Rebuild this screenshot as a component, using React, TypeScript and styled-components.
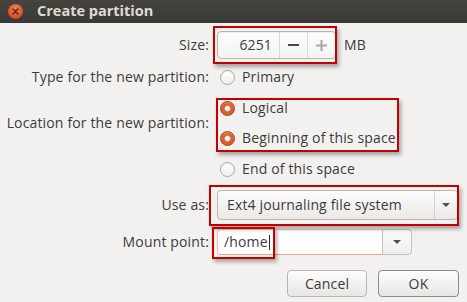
import React from "react";
import styled, { createGlobalStyle } from "styled-components";

const Global = createGlobalStyle`
  * { box-sizing: border-box; }
  html, body { margin: 0; padding: 0; }
  body {
    width: 467px;
    height: 302px;
    overflow: hidden;
    background: #f2f1f0;
    font-family: "Open Sans", "Noto Sans", sans-serif;
    font-size: 14px;
    letter-spacing: 0.15px;
    color: #3c3c3c;
  }
`;

const Window = styled.div`
  width: 467px;
  height: 302px;
  display: flex;
  flex-direction: column;
  background: #f2f1f0;
`;

const TitleBar = styled.div`
  height: 23px;
  flex: none;
  display: flex;
  align-items: center;
  padding-left: 8px;
  gap: 14px;
  background: linear-gradient(#45443f, #3a3935);
`;

const CloseButton = styled.div`
  width: 15px;
  height: 15px;
  border-radius: 50%;
  background: radial-gradient(circle at 50% 35%, #f6865a, #de4b17 70%, #b83c12);
  display: flex;
  align-items: center;
  justify-content: center;
`;

const Title = styled.div`
  color: #dfdbd2;
  font-weight: 700;
  font-size: 14.5px;
  letter-spacing: 0;
  line-height: 1;
  padding-bottom: 1px;
`;

const Body = styled.div`
  position: relative;
  flex: 1;
  padding-top: 6px;
  display: flex;
  flex-direction: column;
`;

const FormGrid = styled.div`
  display: grid;
  grid-template-columns: 209px auto;
  column-gap: 8px;
  grid-template-rows: 32px 32px 30px 30px 32px 40px 34px;
  align-items: center;
`;

const Label = styled.div<{ $rows?: string }>`
  grid-column: 1;
  grid-row: ${(p) => p.$rows ?? "auto"};
  justify-self: end;
  white-space: nowrap;
  line-height: 1;
`;

const Cell = styled.div<{ $row: number }>`
  grid-column: 2;
  grid-row: ${(p) => p.$row};
  display: flex;
  align-items: center;
  gap: 8px;
`;

const SpinBox = styled.div`
  display: flex;
  width: 119px;
  height: 28px;
  border: 1px solid #b9b6b0;
  border-radius: 4px;
  background: linear-gradient(#fdfdfd, #f4f3f2);
  box-shadow: inset 0 1px 1px rgba(0, 0, 0, 0.06);
  overflow: hidden;
`;

const SpinValue = styled.div`
  width: 61px;
  display: flex;
  align-items: center;
  justify-content: flex-end;
  padding-right: 7px;
  line-height: 1;
`;

const SpinStep = styled.div<{ $disabled?: boolean }>`
  flex: 1;
  display: flex;
  align-items: center;
  justify-content: center;
  border-left: 1px solid #dcd9d5;
  color: ${(p) => (p.$disabled ? "#a8a8a8" : "#4a4a4a")};
`;

const Unit = styled.span`
  line-height: 1;
`;

const RadioItem = styled.label`
  display: flex;
  align-items: center;
  gap: 7px;
  padding-left: 3px;
  line-height: 1;
  white-space: nowrap;
`;

const RadioCircle = styled.span<{ $checked?: boolean }>`
  width: 15px;
  height: 15px;
  border-radius: 50%;
  flex: none;
  border: 1px solid ${(p) => (p.$checked ? "#a4471e" : "#aaa7a1")};
  background: ${(p) =>
    p.$checked
      ? "radial-gradient(circle at 50% 50%, #ffffff 0 2px, #f2a27c 2.6px, #e0612f 3.6px, #cc5223 100%)"
      : "linear-gradient(#ffffff, #efeeec)"};
  box-shadow: ${(p) =>
    p.$checked ? "inset 0 1px 1px rgba(255,255,255,0.35)" : "inset 0 1px 1px rgba(0,0,0,0.05)"};
`;

const ComboButton = styled.div`
  display: flex;
  width: 241px;
  height: 30px;
  border: 1px solid #b9b6b0;
  border-radius: 4px;
  background: linear-gradient(#fcfcfc, #ebe9e6);
  overflow: hidden;
`;

const ComboText = styled.div`
  flex: 1;
  display: flex;
  align-items: center;
  padding-left: 9px;
  line-height: 1;
  white-space: nowrap;
`;

const ArrowPart = styled.div<{ $width: number }>`
  width: ${(p) => p.$width}px;
  flex: none;
  display: flex;
  align-items: center;
  justify-content: center;
  border-left: 1px solid #d6d3ce;
`;

const Arrow = styled.span`
  width: 0;
  height: 0;
  border-left: 4px solid transparent;
  border-right: 4px solid transparent;
  border-top: 4px solid #505050;
`;

const ComboEntry = styled.div`
  display: flex;
  width: 195px;
  height: 26px;
`;

const EntryField = styled.div`
  flex: 1;
  display: flex;
  align-items: center;
  padding-left: 6px;
  background: #ffffff;
  border: 1px solid #ecc3b0;
  border-bottom-color: #f0a585;
  border-right: none;
  border-radius: 4px 0 0 4px;
  line-height: 1;
`;

const Caret = styled.span`
  width: 1px;
  height: 15px;
  background: #2a2a2a;
  margin-left: 1px;
`;

const EntryButton = styled.div`
  width: 30px;
  flex: none;
  display: flex;
  align-items: center;
  justify-content: center;
  border: 1px solid #c4c1bb;
  border-radius: 0 4px 4px 0;
  background: linear-gradient(#fbfbfb, #f0efed);
`;

const ButtonBar = styled.div`
  display: flex;
  justify-content: flex-end;
  gap: 11px;
  padding-right: 8px;
  margin-top: 11px;
`;

const Button = styled.button<{ $default?: boolean }>`
  width: ${(p) => (p.$default ? 81 : 80)}px;
  height: 27px;
  border-radius: 4px;
  border: 1px solid ${(p) => (p.$default ? "#8d8b86" : "#b9b6b0")};
  background: linear-gradient(#fdfdfd, #e8e6e3);
  font-family: inherit;
  font-size: 14px;
  letter-spacing: 0.15px;
  color: #3c3c3c;
  line-height: 1;
  padding: 0;
`;

const Annotation = styled.div<{ $x: number; $y: number; $w: number; $h: number }>`
  position: absolute;
  left: ${(p) => p.$x}px;
  top: ${(p) => p.$y}px;
  width: ${(p) => p.$w}px;
  height: ${(p) => p.$h}px;
  border: 2px solid #c20000;
  box-shadow: 2px 3px 4px rgba(0, 0, 0, 0.32);
  pointer-events: none;
`;

const Radio = ({ checked, children }: { checked?: boolean; children: React.ReactNode }) => (
  <RadioItem>
    <RadioCircle $checked={checked} />
    {children}
  </RadioItem>
);

export default function App() {
  return (
    <>
      <Global />
      <Window>
        <TitleBar>
          <CloseButton>
            <svg width="7" height="7" viewBox="0 0 7 7">
              <path d="M1 1L6 6M6 1L1 6" stroke="#3b2a22" strokeWidth="1.4" strokeLinecap="round" />
            </svg>
          </CloseButton>
          <Title>Create partition</Title>
        </TitleBar>
        <Body>
          <FormGrid>
            <Label $rows="1">Size:</Label>
            <Cell $row={1}>
              <SpinBox>
                <SpinValue>6251</SpinValue>
                <SpinStep>
                  <svg width="11" height="2" viewBox="0 0 11 2">
                    <rect width="11" height="2" fill="currentColor" />
                  </svg>
                </SpinStep>
                <SpinStep $disabled>
                  <svg width="11" height="11" viewBox="0 0 11 11">
                    <rect y="4.5" width="11" height="2" fill="currentColor" />
                    <rect x="4.5" width="2" height="11" fill="currentColor" />
                  </svg>
                </SpinStep>
              </SpinBox>
              <Unit>MB</Unit>
            </Cell>

            <Label $rows="2">Type for the new partition:</Label>
            <Cell $row={2}>
              <Radio>Primary</Radio>
            </Cell>
            <Cell $row={3}>
              <Radio checked>Logical</Radio>
            </Cell>

            <Label $rows="3 / span 2">Location for the new partition:</Label>
            <Cell $row={4}>
              <Radio checked>Beginning of this space</Radio>
            </Cell>
            <Cell $row={5}>
              <Radio>End of this space</Radio>
            </Cell>

            <Label $rows="6">Use as:</Label>
            <Cell $row={6}>
              <ComboButton>
                <ComboText>Ext4 journaling file system</ComboText>
                <ArrowPart $width={23}>
                  <Arrow />
                </ArrowPart>
              </ComboButton>
            </Cell>

            <Label $rows="7">Mount point:</Label>
            <Cell $row={7}>
              <ComboEntry>
                <EntryField>
                  /home
                  <Caret />
                </EntryField>
                <EntryButton>
                  <Arrow />
                </EntryButton>
              </ComboEntry>
            </Cell>
          </FormGrid>

          <ButtonBar>
            <Button>Cancel</Button>
            <Button $default>OK</Button>
          </ButtonBar>

          <Annotation $x={213} $y={3} $w={124} $h={38} />
          <Annotation $x={216} $y={75} $w={183} $h={54} />
          <Annotation $x={209} $y={162} $w={250} $h={41} />
          <Annotation $x={212} $y={204} $w={63} $h={32} />
        </Body>
      </Window>
    </>
  );
}
